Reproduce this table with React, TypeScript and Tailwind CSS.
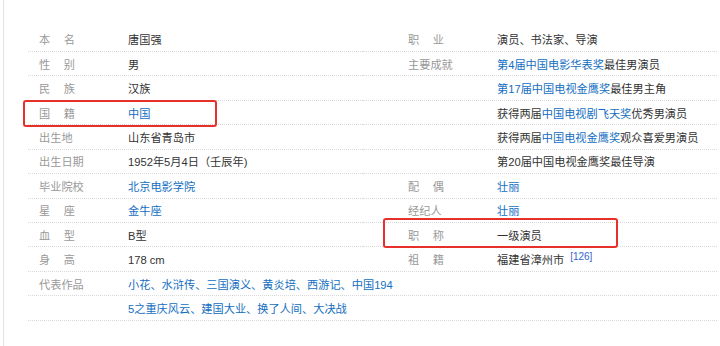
import React from 'react';

type Part = { t: string; link?: boolean };
type Row = { label: string; value: Part[]; sup?: string };

const L = (t: string): Part => ({ t, link: true });
const T = (t: string): Part => ({ t });

const leftRows: Row[] = [
  { label: '本名', value: [T('唐国强')] },
  { label: '性别', value: [T('男')] },
  { label: '民族', value: [T('汉族')] },
  { label: '国籍', value: [L('中国')] },
  { label: '出生地', value: [T('山东省青岛市')] },
  { label: '出生日期', value: [T('1952年5月4日（壬辰年)')] },
  { label: '毕业院校', value: [L('北京电影学院')] },
  { label: '星座', value: [L('金牛座')] },
  { label: '血型', value: [T('B型')] },
  { label: '身高', value: [T('178 cm')] },
  { label: '代表作品', value: [L('小花、水浒传、三国演义、黄炎培、西游记、中国194')] },
  { label: '', value: [L('5之重庆风云、建国大业、换了人间、大决战')] },
];

const rightRows: Row[] = [
  { label: '职业', value: [T('演员、书法家、导演')] },
  { label: '主要成就', value: [L('第4届中国电影华表奖'), T('最佳男演员')] },
  { label: '', value: [L('第17届中国电视金鹰奖'), T('最佳男主角')] },
  { label: '', value: [T('获得两届'), L('中国电视剧飞天奖'), T('优秀男演员')] },
  { label: '', value: [T('获得两届'), L('中国电视金鹰奖'), T('观众喜爱男演员')] },
  { label: '', value: [T('第20届中国电视金鹰奖最佳导演')] },
  { label: '配偶', value: [L('壮丽')] },
  { label: '经纪人', value: [L('壮丽')] },
  { label: '职称', value: [T('一级演员')] },
  { label: '祖籍', value: [T('福建省漳州市')], sup: '[126]' },
  { label: '', value: [] },
  { label: '', value: [] },
];

const Label: React.FC<{ text: string }> = ({ text }) =>
  text.length === 2 ? (
    <span className="flex justify-between w-[36px]">
      <span>{text[0]}</span>
      <span>{text[1]}</span>
    </span>
  ) : (
    <span>{text}</span>
  );

const InfoRow: React.FC<{ row: Row; labelPad: string; labelW: string }> = ({ row, labelPad, labelW }) => (
  <div className="flex items-center h-[24.45px] pt-[2px] border-b border-dotted border-[#d9d9d9]">
    <div className={`${labelPad} ${labelW} shrink-0 text-[#999999]`}>
      <Label text={row.label} />
    </div>
    <div className="whitespace-nowrap text-[#333333]">
      {row.value.map((p, i) =>
        p.link ? (
          <span key={i} className="text-[#136ec2]">{p.t}</span>
        ) : (
          <span key={i}>{p.t}</span>
        )
      )}
      {row.sup && (
        <sup className="ml-[6px] text-[10px] text-[#3366cc] relative -top-[4px]">{row.sup}</sup>
      )}
    </div>
  </div>
);

export default function App() {
  return (
    <div
      className="relative w-[720px] h-[346px] bg-white overflow-hidden text-[11.2px] leading-[16px]"
      style={{ fontFamily: '"Liberation Sans", "Noto Sans CJK SC", sans-serif' }}
    >
      <div className="ml-[3px] h-full border-l border-[#e4e4e4] pt-[27.5px] pl-[24px] flex">
        <div className="w-[335px]">
          {leftRows.map((r, i) => (
            <InfoRow key={i} row={r} labelPad="pl-[11px]" labelW="w-[100px]" />
          ))}
        </div>
        <div className="w-[354px]">
          {rightRows.map((r, i) => (
            <InfoRow key={i} row={r} labelPad="pl-[45px]" labelW="w-[134px]" />
          ))}
        </div>
      </div>

      {/* annotation boxes */}
      <div className="absolute left-[23px] top-[100px] w-[194px] h-[27px] border-2 border-[#e8302a] rounded-[3px]" />
      <div className="absolute left-[383px] top-[218px] w-[235px] h-[30px] border-2 border-[#e8302a] rounded-[3px]" />
    </div>
  );
}
